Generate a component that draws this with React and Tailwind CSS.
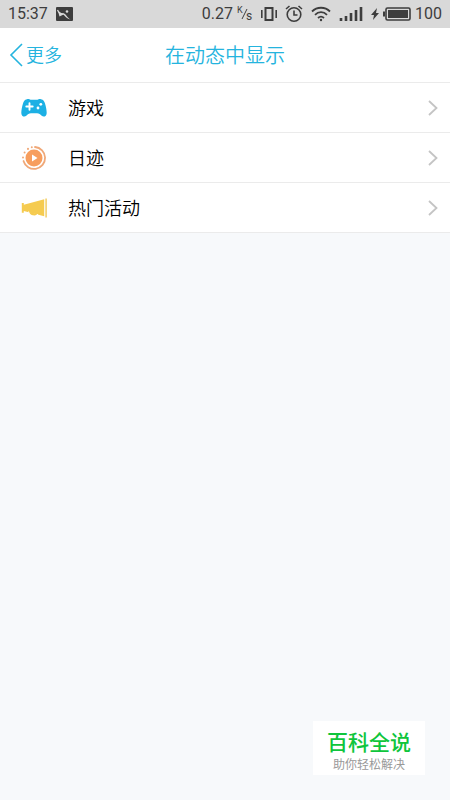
import React from 'react';

const items = [
  { id: 'game', label: '游戏', icon: GameIcon },
  { id: 'diary', label: '日迹', icon: DiaryIcon },
  { id: 'events', label: '热门活动', icon: MegaphoneIcon },
];

function GameIcon() {
  return (
    <svg viewBox="0 0 26 20" className="w-[26px] h-5" aria-hidden="true">
      <path
        d="M6 1.200C8 .6 9 1.800 10.500 1.800h5C17 1.800 18 .6 20 1.200c2.500.6 3.300 2 4 4.300.9 3 1.700 6.500 1.700 9.500 0 3.500-3.200 4.500-5 2.800-1.500-1.400-2.500-2.600-4.700-2.600h-6c-2.200 0-3.200 1.200-4.700 2.600C3.500 19.500.3 18.500.3 15 .3 12 1.100 8.500 2 5.500 2.700 3.200 3.500 1.800 6 1.200z"
        fill="#1cb0e4"
      />
      <path d="M8.500 5.300v6.400M5.300 8.500h6.400" stroke="#fff" strokeWidth="1.900" strokeLinecap="round" />
      <circle cx="19.800" cy="6.300" r="1.400" fill="#fff" />
      <circle cx="17" cy="10" r="1.400" fill="#fff" />
    </svg>
  );
}

function DiaryIcon() {
  return (
    <svg viewBox="0 0 26 26" className="w-[26px] h-[26px]" fill="none" aria-hidden="true">
      <circle cx="13" cy="13" r="8.500" fill="#f79e5e" />
      <path d="M14 2a11 11 0 1 1-11.500 14" stroke="#f0a878" strokeWidth="1.800" strokeLinecap="round" />
      <path d="M2 12.500v.1M3.600 7.500v.1M7 3.800v.1M10.800 2.200v.1" stroke="#f0a878" strokeWidth="2" strokeLinecap="round" />
      <path d="M11 9.500v7l5.500-3.500z" fill="#fff" />
    </svg>
  );
}

function MegaphoneIcon() {
  return (
    <svg viewBox="0 0 26 20" className="w-[26px] h-5" fill="none" aria-hidden="true">
      <path d="M.8 5h2v1.800L23.200 1.200v17L2.800 13v1.800h-2z" fill="#f5cb50" />
      <path d="M7.500 13.500c.5 3 3 4.500 6 4.500 1.500 0 2.800-.5 3.200-1.800" fill="#f5cb50" stroke="#fff" strokeWidth="1.100" />
      <path d="M25.100.5v19" stroke="#f3d06c" strokeWidth="1.600" />
    </svg>
  );
}

function StatusBar() {
  return (
    <div className="h-7 px-2 flex items-center justify-between bg-[#d9d9d9] text-[#3d3d3d] text-base font-['Roboto',sans-serif]">
      <div className="flex items-center gap-2">
        <span>15:37</span>
        <svg viewBox="0 0 17 14" className="w-[17px] h-3.5" aria-hidden="true">
          <rect width="17" height="14" rx="1" fill="#3d3d3d" />
          <path d="M1.500 2.500c1 3 4 4 6.500 4 1.500 0 3 4 6.500 6-3.500-.5-5.500-3-7-5L3.500 9.500" fill="#d9d9d9" />
          <path d="M1.500 3c1 2.500 4 4 6.500 4" stroke="#d9d9d9" strokeWidth="1.200" fill="none" />
          <circle cx="11" cy="4.500" r="1.300" fill="#d9d9d9" />
        </svg>
      </div>
      <div className="flex items-center gap-2">
        <span className="flex items-center gap-1">
          0.27
          <svg viewBox="0 0 16 16" className="w-4 h-4" fill="currentColor" aria-hidden="true">
            <text x="0" y="7" fontSize="9">K</text>
            <path d="M5 13L10 3" stroke="currentColor" />
            <text x="9" y="14" fontSize="12">s</text>
          </svg>
        </span>
        <svg viewBox="0 0 16 14" className="w-4 h-3.5" fill="none" stroke="currentColor" aria-hidden="true">
          <rect x="4.500" y="1" width="7" height="12" strokeWidth="2" />
          <path d="M.8 3v8M15.200 3v8" strokeWidth="1.600" />
        </svg>
        <svg viewBox="0 0 18 18" className="w-[18px] h-[18px]" fill="none" stroke="currentColor" strokeWidth="1.600" aria-hidden="true">
          <circle cx="9" cy="9.500" r="6.800" />
          <path d="M9 5.500v4.500h3.500M1 4l3.500-3M17 4l-3.500-3" />
        </svg>
        <svg viewBox="0 0 20 16" className="w-5 h-4" fill="none" stroke="currentColor" strokeWidth="1.800" aria-hidden="true">
          <path d="M1 5.500c5-5 13-5 18 0M4 8.800c3.500-3.500 8.500-3.500 12 0M7 12c2-1.800 4-1.800 6 0" />
          <circle cx="10" cy="14" r="1.200" fill="currentColor" stroke="none" />
        </svg>
        <svg viewBox="0 0 24 16" className="w-6 h-4" stroke="currentColor" strokeWidth="2.600" aria-hidden="true">
          <path d="M2 15v-3M7 15v-5M12 15V7M17 15V4M22 15V1" />
        </svg>
        <div className="flex items-center gap-1">
          <svg viewBox="0 0 8 12" className="w-2 h-3" fill="currentColor" aria-hidden="true">
            <path d="M6 0L0 7h3L2 12l6-7H5z" />
          </svg>
          <svg viewBox="0 0 28 14" className="w-7 h-3.5" aria-hidden="true">
            <rect x="3" y="1" width="24" height="12" rx="1.500" fill="none" stroke="currentColor" strokeWidth="1.600" />
            <rect x="5" y="3" width="20" height="8" fill="currentColor" />
            <path d="M1 4.500v5" stroke="currentColor" strokeWidth="2" />
          </svg>
          <span>100</span>
        </div>
      </div>
    </div>
  );
}

export default function App() {
  return (
    <div className="min-h-screen flex flex-col bg-[#f7f9fb] font-['Noto_Sans_CJK_SC',sans-serif]">
      <StatusBar />

      <header className="grid grid-cols-[1fr_auto_1fr] items-center h-[55px] px-2 bg-white border-b border-[#ebebeb] text-[#25b4de]">
        <a href="#more" className="flex items-center gap-0.5 text-lg font-[350]">
          <svg viewBox="0 0 16 26" className="w-4 h-[26px]" fill="none" stroke="currentColor" strokeWidth="1.600" aria-hidden="true">
            <path d="M14 2L3 13l11 11" />
          </svg>
          <span className="pb-0.5">更多</span>
        </a>
        <h1 className="text-xl font-[350]">在动态中显示</h1>
      </header>

      <ul className="bg-white">
        {items.map(({ id, label, icon: Icon }) => (
          <li key={id} className="border-b border-[#ebebeb]">
            <a href={`#${id}`} className="flex items-center h-[49px] pl-[21px] pr-3 text-lg font-[350] text-black">
              <Icon />
              <span className="ml-[21px] pb-0.5 flex-1">{label}</span>
              <svg viewBox="0 0 10 16" className="w-2.5 h-4" fill="none" stroke="#c4c4c4" strokeWidth="1.800" aria-hidden="true">
                <path d="M1 1l7.500 7L1 15" />
              </svg>
            </a>
          </li>
        ))}
      </ul>

      <footer className="mt-auto mb-[25px] mr-[25px] self-end bg-white px-3.5 py-1 text-center">
        <p className="text-[21px] leading-8 font-medium text-[#0fc53c]">百科全说</p>
        <p className="text-xs leading-[14px] text-[#999]">助你轻松解决</p>
      </footer>
    </div>
  );
}
